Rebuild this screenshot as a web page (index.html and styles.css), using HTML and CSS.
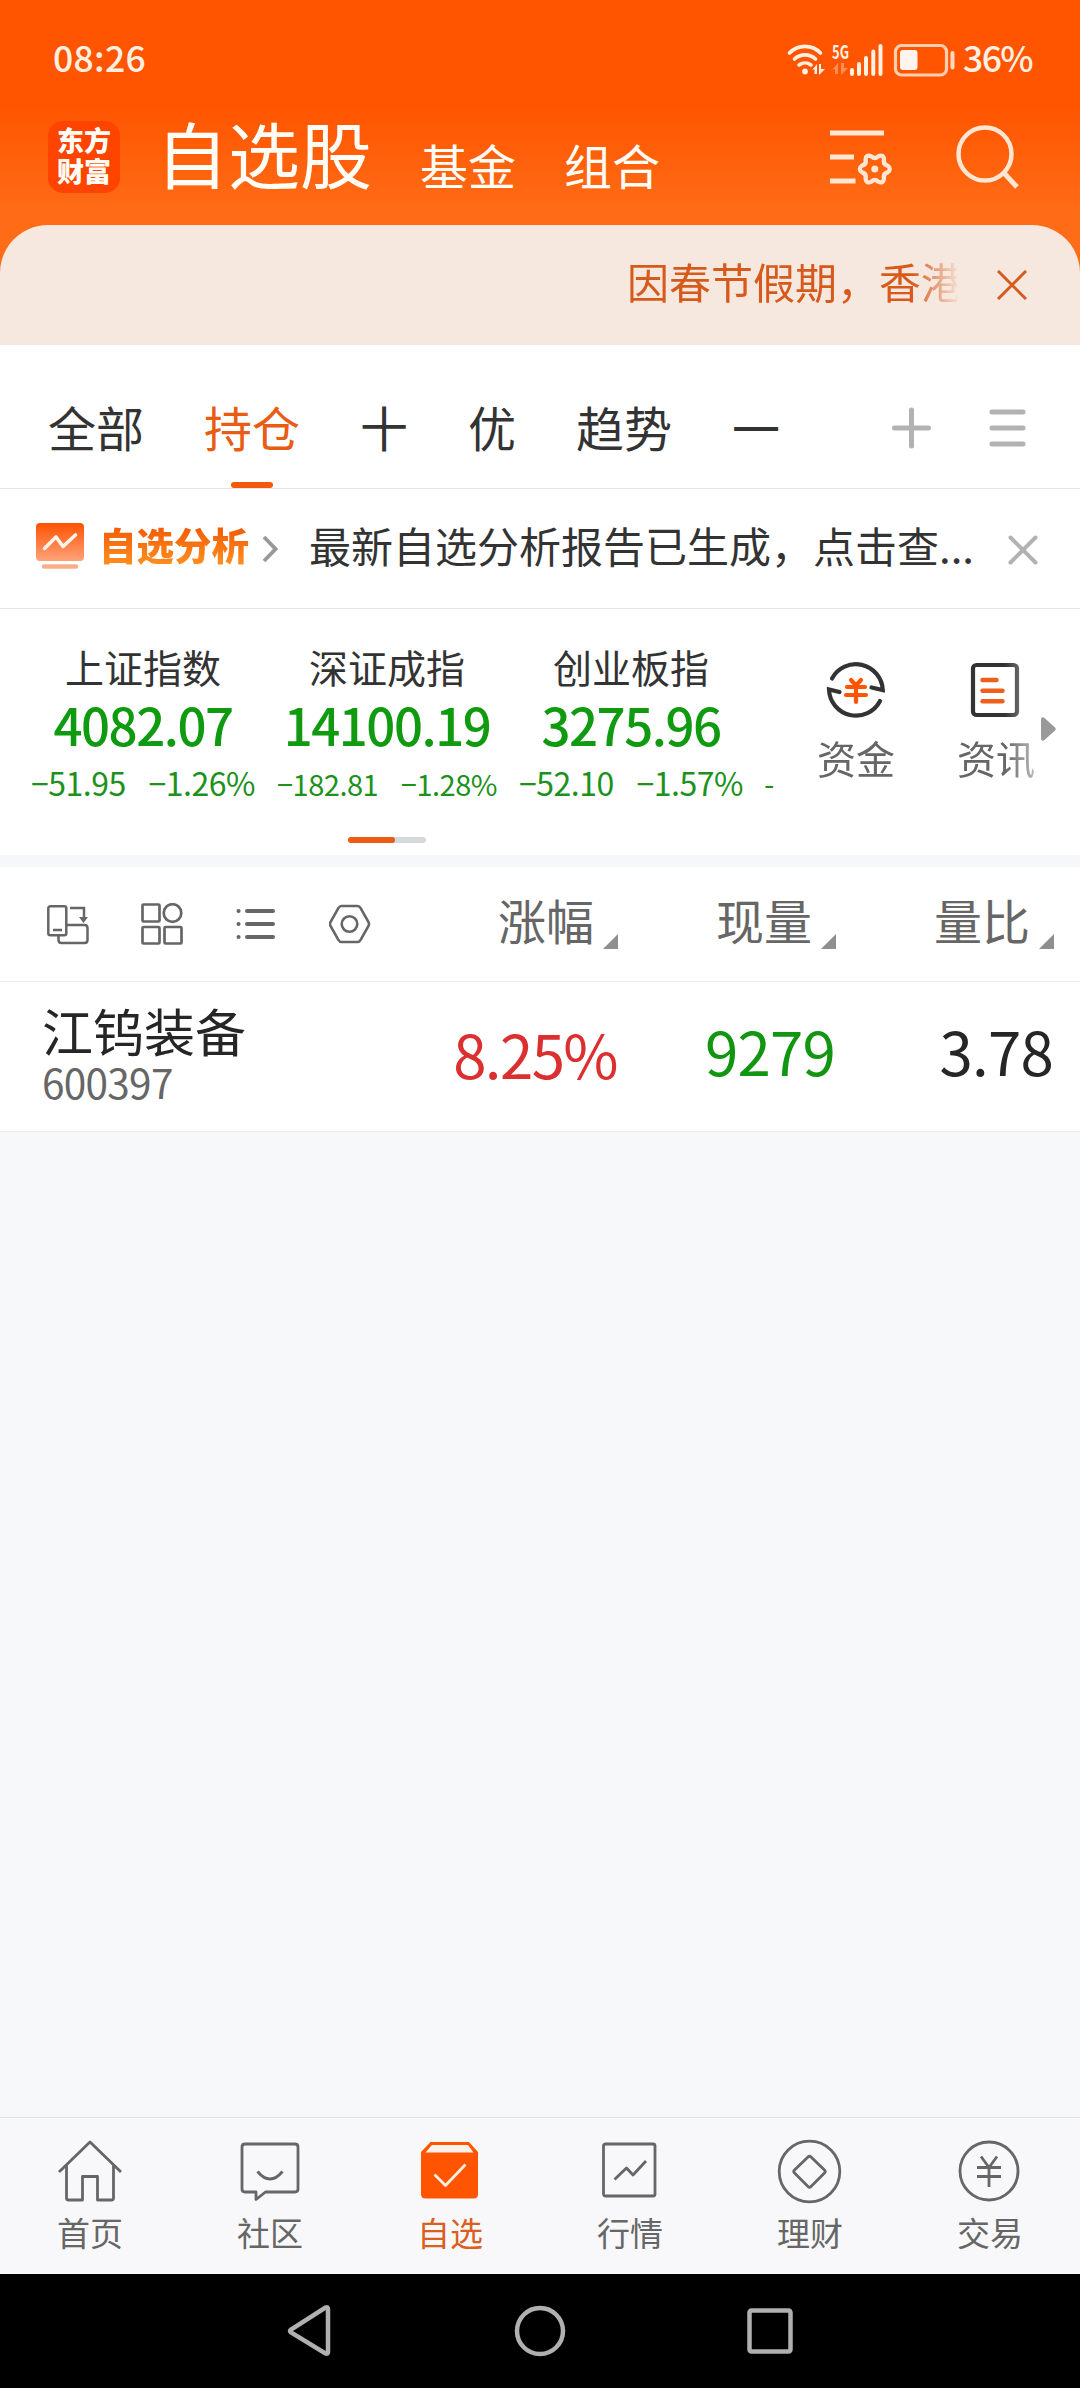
FILE: index.html
```html
<!DOCTYPE html>
<html lang="zh-CN">
<head>
<meta charset="utf-8">
<title>自选股</title>
<link rel="stylesheet" href="styles.css">
</head>
<body>
<div class="app">
  <header class="top">
    <div class="status">
      <span class="clock">08:26</span>
      <svg class="status-icons" width="172" height="36" viewBox="0 0 172 36">
        <g fill="none" stroke="#fff0e2" stroke-width="3.6" stroke-linecap="round">
          <path d="M3.500 12a21.500 21.500 0 0 1 31 0M8.500 18a15.500 15.500 0 0 1 21 0M13 24a10 10 0 0 1 12 0"/>
        </g>
        <circle cx="19" cy="30.500" r="2.900" fill="#fff0e2"/>
        <path d="M26 29l5-6v10h-2.500v-5zM33 23h2v5h4l-6 6z" fill="#fff0e2"/>
        <text class="net" x="46" y="18" textLength="17" lengthAdjust="spacingAndGlyphs">5G</text>
        <path d="M46 29l6-7v11h-3v-5zM55 22h3v5h4l-7 7z" fill="#ff8f55"/>
        <path d="M66 29v4M73 23v10M80 17v16M87.300 10.500v22.500M94.500 5v28" stroke="#fff0e2" stroke-width="4" stroke-linecap="round" fill="none"/>
        <rect x="109.500" y="4.500" width="51" height="29.500" rx="6" fill="none" stroke="#fdcfb0" stroke-width="3.200"/>
        <rect x="114" y="9" width="17.500" height="20" rx="3" fill="#fff5ee"/>
        <path d="M166.500 12v14.500" stroke="#fdd9c0" stroke-width="4" stroke-linecap="round"/>
      </svg>
      <span class="battery">36%</span>
    </div>
    <div class="title-row">
      <div class="logo">东方<br>财富</div>
      <h1 class="title">自选股</h1>
      <span class="subtab">基金</span>
      <span class="subtab">组合</span>
      <svg class="filter" width="66" height="60" viewBox="0 0 66 60" fill="none" stroke="#ffe6d3" stroke-width="4.800">
        <path d="M2 8h54M2 32h24M2 56h25.500"/>
        <path transform="translate(46.800 44)" stroke-width="4.300" d="M12.600-3.400Q17.500 0 12.600 3.400Q8.200 4.800 9.200 9.200Q8.800 15.200 3.400 12.600Q0 9.500-3.400 12.600Q-8.800 15.200-9.200 9.200Q-8.200 4.800-12.600 3.400Q-17.500 0-12.600-3.400Q-8.200-4.800-9.200-9.200Q-8.800-15.200-3.400-12.600Q0-9.500 3.400-12.600Q8.800-15.200 9.200-9.200Q8.200-4.800 12.600-3.400Z"/>
        <circle cx="46.800" cy="44" r="3.500" fill="#ffe6d3" stroke="none"/>
      </svg>
      <svg class="search" width="66" height="66" viewBox="0 0 66 66" fill="none" stroke="#ffe6d3" stroke-width="4.500">
        <circle cx="31" cy="31" r="26.500"/><path d="M50 50l13 14" stroke-width="5"/>
      </svg>
    </div>
    <div class="notice">
      <span class="notice-text">因春节假期，香港</span>
      <svg width="30" height="30" viewBox="0 0 30 30" stroke="#d65a1c" stroke-width="3"><path d="M1 1l28 28M29 1L1 29"/></svg>
    </div>
  </header>

  <nav class="groups">
    <span>全部</span><span class="on">持仓</span><span>十</span><span>优</span><span>趋势</span><span>一</span>
    <svg class="group-icons" width="136" height="42" viewBox="0 0 136 42" stroke="#b2b2b2" stroke-width="5" stroke-linecap="round"><path d="M3.500 21h34M20.500 3v36M101 5h31M101 21h31M101 37h31"/></svg>
  </nav>

  <section class="analysis">
    <svg width="48" height="46" viewBox="0 0 48 46">
      <defs><linearGradient id="g" x1="0" y1="0" x2="0" y2="1"><stop offset="0" stop-color="#ff5200"/><stop offset="1" stop-color="#ffa27a"/></linearGradient></defs>
      <rect width="48" height="38" rx="4" fill="url(#g)"/>
      <path d="M8.500 25.500L20 14l7 9.500L39.500 12" fill="none" stroke="#fff5e8" stroke-width="3.600" stroke-linecap="round" stroke-linejoin="round"/>
      <path d="M8 43.500h32" stroke="#f9ae8b" stroke-width="4.400" stroke-linecap="round"/>
    </svg>
    <strong>自选分析</strong>
    <svg class="chev" width="16" height="28" viewBox="0 0 16 28" fill="none" stroke="#999" stroke-width="3.800"><path d="M2 2l11.500 12L2 26"/></svg>
    <span class="report">最新自选分析报告已生成，点击查...</span>
    <svg class="close" width="30" height="30" viewBox="0 0 30 30" stroke="#b2b2b2" stroke-width="4" stroke-linecap="round"><path d="M2.500 2.500l25 25M27.500 2.500l-25 25"/></svg>
  </section>

  <section class="market">
    <div class="indices">
      <div class="index"><div class="name">上证指数</div><div class="value">4082.07</div><div class="delta"><span>−51.95</span><span>−1.26%</span></div></div>
      <div class="index"><div class="name">深证成指</div><div class="value">14100.19</div><div class="delta small"><span>−182.81</span><span>−1.28%</span></div></div>
      <div class="index"><div class="name">创业板指</div><div class="value">3275.96</div><div class="delta"><span>−52.10</span><span>−1.57%</span></div></div>
      <span class="peek">-</span>
    </div>
    <div class="shortcuts">
      <div class="shortcut">
        <svg width="60" height="60" viewBox="0 0 60 60" fill="none" stroke="#333" stroke-width="4.200">
          <path d="M6 18.500A27 27 0 0 1 56.800 30L45.500 27.500M54 41A27 27 0 0 1 3 29.500L13.500 32" stroke-linecap="round"/>
          <path d="M25 20l5 5.500l5-5.500M21 27h18M20 35h20M30 26v16" stroke="#ff5500" stroke-linecap="round"/>
        </svg>资金
      </div>
      <div class="shortcut">
        <svg width="60" height="60" viewBox="0 0 60 60" fill="none" stroke="#333" stroke-width="4.200">
          <rect x="7" y="5" width="44" height="50" rx="3.500"/>
          <path d="M16.500 20h14M16.500 30.700h20M16.500 41.300h20" stroke="#ec6019" stroke-width="4.500" stroke-linecap="round"/>
        </svg>资讯
      </div>
    </div>
    <svg class="more" width="15" height="24" viewBox="0 0 15 24" fill="#999"><path d="M0 3.500Q0-1.500 3.500 1L14 10.500Q15.500 12 14 13.500L3.500 23Q0 25.500 0 20.500Z"/></svg>
    <div class="pager"><i></i></div>
  </section>

  <section class="table">
    <div class="row head">
      <div class="tools">
        <svg width="42" height="42" viewBox="0 0 42 42" fill="none" stroke="#666" stroke-width="2.500"><rect x="1.300" y="3.300" width="18" height="29" rx="2"/><path d="M6 27h9M19.500 22h18q3 0 3 3v12q0 3-3 3h-23q-3 0-3-3v-4M23 5h14v9"/><path d="M32 14h9l-4.500 6z" fill="#666" stroke="none"/></svg>
        <svg width="42" height="42" viewBox="0 0 42 42" fill="none" stroke="#666" stroke-width="2.700"><rect x="1.500" y="1.500" width="17" height="17" rx="1"/><circle cx="31.500" cy="10" r="8.800"/><rect x="1.500" y="24" width="17" height="16.500" rx="1"/><rect x="23.500" y="24" width="17" height="16.500" rx="1"/></svg>
        <svg width="42" height="42" viewBox="0 0 42 42" stroke="#666" stroke-width="4" stroke-linecap="round"><path d="M12 8h26M12 21h26M12 34h26M3.500 8h.1M3.500 21h.1M3.500 34h.1"/></svg>
        <svg width="42" height="42" viewBox="0 0 42 42" fill="none" stroke="#666" stroke-width="2.600"><path d="M12.500 3h16q2 0 3 2l8 14q1 2 0 4l-8 14q-1 2-3 2h-16q-2 0-3-2l-8-14q-1-2 0-4l8-14q1-2 3-2z"/><circle cx="20.500" cy="21" r="7.800"/></svg>
      </div>
      <span class="sort">涨幅</span><span class="sort">现量</span><span class="sort">量比</span>
    </div>
    <div class="row stock">
      <div class="who"><div class="stock-name">江钨装备</div><div class="code">600397</div></div>
      <span class="num up">8.25%</span><span class="num down">9279</span><span class="num">3.78</span>
    </div>
  </section>

  <nav class="tabbar">
    <a><svg width="68" height="66" viewBox="0 0 68 66"><path d="M3 34L34 4l31 30M10.500 27v33q0 2 2 2h14V38.500h15V62h14q2 0 2-2V27"/></svg>首页</a>
    <a><svg width="68" height="66" viewBox="0 0 68 66"><path d="M9 6h50q3 0 3 3v42q0 3-3 3H29.500L20 61.500V54H9q-3 0-3-3V9q0-3 3-3zM21.500 33.500q12.500 15 25 0"/></svg>社区</a>
    <a class="on"><svg width="68" height="66" viewBox="0 0 68 66"><path d="M14.500 4h38.500l9 10v42q0 4.500-4.500 4.500h-48Q5 60.500 5 56V14z" fill="#ff5500" stroke="none"/><path d="M16 7h36l5.500 7.500H9.500z" fill="#fdf1ea" stroke="none"/><path d="M18.500 36.500L29.500 47.500L49.500 26.500" stroke="#fff0df"/></svg>自选</a>
    <a><svg width="68" height="66" viewBox="0 0 68 66"><rect x="7.500" y="6" width="51.500" height="52" rx="2"/><path d="M18.500 41.500L30.500 30l6.500 7L50 23"/></svg>行情</a>
    <a><svg width="68" height="66" viewBox="0 0 68 66"><circle cx="33.500" cy="33.500" r="30.300"/><path d="M32 19q1.500-1.500 3 0L48.500 32q1.500 1.500 0 3L35 48.500q-1.500 1.500-3 0L18.500 35q-1.500-1.500 0-3z"/></svg>理财</a>
    <a><svg width="68" height="66" viewBox="0 0 68 66"><circle cx="33" cy="33" r="29"/><path d="M25 18.500l8 11l8-11M21 29.500h24M21 38.500h24M33 29v20"/></svg>交易</a>
  </nav>

  <div class="sysnav">
    <svg width="46" height="54" viewBox="0 0 46 54"><path d="M38.500 3.500q2.500-1 2.500 1.500v43q0 2.500-2.500 1.500L4 28.500q-2-1.500 0-3z"/></svg>
    <svg width="54" height="54" viewBox="0 0 54 54"><circle cx="27" cy="27" r="23"/></svg>
    <svg width="50" height="54" viewBox="0 0 50 54"><rect x="2.500" y="6.500" width="41" height="41" rx="2"/></svg>
  </div>
</div>
</body>
</html>
```
FILE: styles.css
```css
* { box-sizing: border-box; margin: 0; padding: 0; }
body {
  width: 1080px;
  font-family: "Noto Sans CJK SC", sans-serif;
  font-weight: 400;
  color: #333;
  background: #f7f8fa;
}
svg { display: block; flex: none; }
span, strong, h1 { white-space: nowrap; }
.app { display: flex; flex-direction: column; height: 2388px; overflow: hidden; }

.top { background: linear-gradient(#ff5500 0, #ff5500 105px, #ff6c17 215px, #ff6c17 100%); }
.status {
  display: flex;
  height: 110px;
  padding: 41px 0 0 53px;
  color: #fff0e2;
  font-size: 35.5px;
  line-height: 32px;
}
.clock { width: 733px; font-weight: 500; letter-spacing: .3px; }
.status-icons { margin-right: 5px; }
.battery { font-weight: 500; letter-spacing: -1.6px; }
.net { font: 700 19px "Noto Sans CJK SC", sans-serif; fill: #fff0e2; }

.title-row { display: flex; align-items: flex-start; height: 115px; padding-left: 48px; color: #fffdf6; }
.logo {
  width: 72px;
  height: 72px;
  margin-top: 11px;
  padding-top: 3px;
  border-radius: 15px;
  background: #ff4400;
  font-size: 27px;
  font-weight: 900;
  line-height: 31px;
  text-align: center;
}
.title { margin: 6px 0 0 36px; font-size: 72px; line-height: 72px; font-weight: 400; }
.subtab { margin: 30px 0 0 48px; font-size: 48px; line-height: 48px; }
.filter { margin: 15px 0 0 168px; }
.search { margin: 13px 0 0 60px; }

.notice {
  display: flex;
  align-items: center;
  height: 120px;
  padding-left: 627px;
  border-radius: 48px 48px 0 0;
  background: #f6e7df;
  color: #d65a1c;
}
.notice-text {
  width: 330px;
  margin: -9px 40px 0 0;
  overflow: hidden;
  font-size: 42px;
  -webkit-mask-image: linear-gradient(90deg, #000 285px, transparent 334px);
  mask-image: linear-gradient(90deg, #000 285px, transparent 334px);
}

.groups {
  display: flex;
  gap: 60px;
  height: 144px;
  padding-left: 48px;
  border-bottom: 1px solid #e5e5e5;
  background: #fff;
  font-size: 48px;
  line-height: 48px;
}
.groups span { padding-top: 57px; }
.groups .on { display: flex; flex-direction: column; align-items: center; justify-content: space-between; color: #e85c14; }
.groups .on::after { content: ""; width: 42px; height: 6px; border-radius: 3px; background: #f2590a; }
.group-icons { margin: 62px 0 0 51px; }

.analysis {
  display: flex;
  height: 120px;
  padding: 34px 0 0 36px;
  border-bottom: 1px solid #e5e5e5;
  background: #fff;
}
.analysis strong {
  height: 46px;
  margin-left: 15px;
  font-size: 37.5px;
  line-height: 42px;
  font-weight: 900;
  color: transparent;
  background: linear-gradient(#f25c05 5px, #ff8f1f 42px);
  -webkit-background-clip: text;
  background-clip: text;
}
.chev { margin: 12px 0 0 13px; }
.report { margin-left: 31px; width: 665px; font-size: 42px; line-height: 44px; }
.close { margin: 12px 0 0 34px; }

.market {
  display: grid;
  grid-template-columns: 785px 256px 39px;
  grid-template-rows: 228px 6px;
  height: 258px;
  border-bottom: 12px solid #f5f7fa;
  background: #fff;
}
.indices { display: flex; padding-left: 21px; overflow: hidden; }
.index { flex: none; width: 244px; padding-top: 35px; text-align: center; }
.name { font-size: 39px; line-height: 44px; }
.value {
  margin-top: 10px;
  color: #109a10;
  font-size: 51px;
  line-height: 52px;
  font-weight: 500;
  letter-spacing: -1.5px;
}
.delta {
  display: flex;
  justify-content: space-between;
  width: 224px;
  margin: 16px 0 0 10px;
  color: #1c921c;
  font-size: 32px;
  line-height: 32px;
  letter-spacing: -.5px;
}
.delta.small { width: 220px; margin-left: 12px; font-size: 29px; line-height: 34px; }
.peek { margin: 157px 0 0 11px; color: #1c921c; font-size: 30px; line-height: 32px; }
.shortcuts {
  display: flex;
  gap: 62px;
  padding: 51px 0 0 32px;
  -webkit-mask-image: linear-gradient(90deg, #000 220px, rgba(0,0,0,.35) 256px);
  mask-image: linear-gradient(90deg, #000 220px, rgba(0,0,0,.35) 256px);
}
.shortcut {
  display: flex;
  flex-direction: column;
  align-items: center;
  width: 78px;
  gap: 15px;
  color: #666;
  font-size: 39px;
  line-height: 44px;
  white-space: nowrap;
}
.more { margin-top: 108px; }
.pager { width: 78px; height: 6px; margin-left: 348px; border-radius: 3px; background: #d5d9dc; }
.pager i { display: block; width: 47px; height: 6px; border-radius: 3px; background: #ec5b14; }

.table { flex: 1; }
.row { display: grid; grid-template-columns: 400px 218px 218px 218px; background: #fff; }
.head { height: 115px; border-bottom: 1px solid #ebebeb; }
.tools { display: flex; gap: 52px; padding: 36px 0 0 47px; }
.sort {
  display: flex;
  justify-content: flex-end;
  gap: 9px;
  padding-top: 28px;
  color: #666;
  font-size: 48px;
  line-height: 48px;
}
.sort::after {
  content: "";
  width: 15px;
  height: 15px;
  margin-top: 39px;
  background: #8e8e93;
  clip-path: polygon(100% 0, 100% 100%, 0 100%);
}
.stock { height: 150px; border-bottom: 1px solid #ebebeb; }
.who { padding: 21px 0 0 42px; }
.stock-name { color: #262626; font-size: 51px; line-height: 54px; }
.code { margin-top: 4px; color: #666; font-size: 40.5px; line-height: 42px; letter-spacing: -.7px; }
.num { padding: 38px 1px 0 0; color: #262626; font-size: 60px; line-height: 60px; text-align: right; letter-spacing: -.8px; }
.num.up { padding-top: 41px; color: #dc2f2f; letter-spacing: -1.6px; }
.num.down { color: #129612; }

.tabbar {
  display: flex;
  height: 157px;
  border-top: 1px solid #e2e2e4;
  background: #f8f8fa;
}
.tabbar a {
  display: flex;
  flex: 1;
  flex-direction: column;
  align-items: center;
  padding-top: 20px;
  gap: 10px;
  color: #666;
  font-size: 33px;
  line-height: 36px;
}
.tabbar svg { fill: none; stroke: #666; stroke-width: 2.8; stroke-linejoin: round; }
.tabbar .on { color: #d9601f; }

.sysnav { display: flex; justify-content: center; gap: 180px; height: 114px; padding: 30px 0 0 4px; background: #000; }
.sysnav svg { fill: none; stroke: #b0b0b0; stroke-width: 4.5; }
```
